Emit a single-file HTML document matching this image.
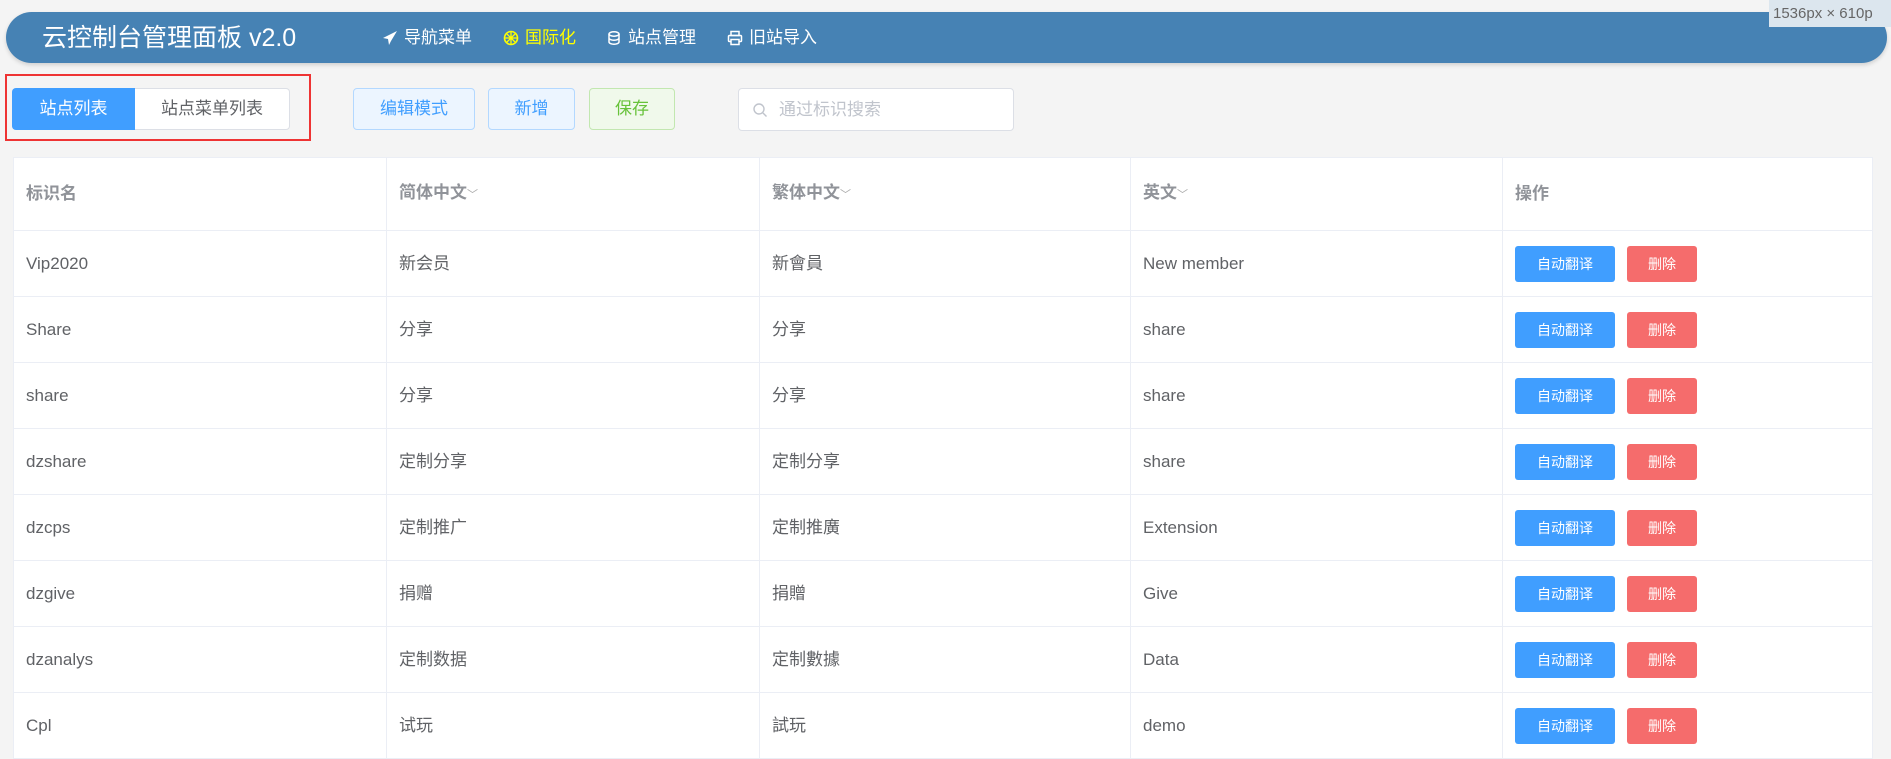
<!DOCTYPE html>
<html><head><meta charset="utf-8"><style>
*{box-sizing:border-box;margin:0;padding:0}
body{width:1891px;height:758px;overflow:hidden;background:#f4f4f4;font-family:"Liberation Sans","Noto Sans CJK SC",sans-serif;position:relative;color:#606266}
.hdr{position:absolute;left:6px;top:12px;width:1881px;height:51px;background:#4682b4;border-radius:26px;box-shadow:0 2px 4px rgba(0,0,0,.15)}
.title{position:absolute;left:36px;top:11px;font-size:25px;color:#fff;line-height:30px}
.nav{position:absolute;top:15px;font-size:17px;color:#fff;line-height:22px;display:flex;align-items:center;gap:6px}
.nav.act{color:#ffff00}
.badge{position:absolute;right:0;top:0;width:122px;height:27px;background:#dce6ee;color:#666;font-size:15px;line-height:27px;padding-left:4px}
.red{position:absolute;left:5px;top:74px;width:306px;height:67px;border:2px solid #e33}
.tab{position:absolute;top:88px;height:42px;font-size:17px;line-height:42px;text-align:center}
.btn{position:absolute;top:88px;height:42px;border-radius:4px;font-size:17px;line-height:40px;text-align:center}
.search{position:absolute;left:738px;top:88px;width:276px;height:43px;background:#fff;border:1px solid #dcdfe6;border-radius:4px;color:#c0c4cc;font-size:17px;line-height:41px;padding-left:40px}
table{position:absolute;left:13px;top:157px;width:1860px;border-collapse:collapse;background:#fff;font-size:17px}
td,th{border:1px solid #ebeef5;text-align:left;padding-left:12px;font-weight:normal;line-height:20px;vertical-align:middle}
th{height:73px;color:#909399;font-weight:bold}
td{height:66px}
.a{display:inline-block;width:100px;height:36px;line-height:36px;text-align:center;color:#fff;background:#409eff;border-radius:3px;font-size:14px;vertical-align:middle}
.d{display:inline-block;width:70px;height:36px;line-height:36px;text-align:center;color:#fff;background:#f56c6c;border-radius:3px;font-size:14px;margin-left:12px;vertical-align:middle}
.ar{font-size:11px;color:#aaa;font-weight:normal}
</style></head><body>
<div class="hdr">
<div class="title">云控制台管理面板 v2.0</div>
<div class="nav" style="left:376px"><svg width="16" height="16" viewBox="0 0 16 16"><path d="M15 1L1 8l5 1 1 6 2-4z" fill="#fff"/></svg>导航菜单</div>
<div class="nav act" style="left:497px"><svg width="16" height="16" viewBox="0 0 16 16"><circle cx="8" cy="8" r="6.5" fill="none" stroke="#ff0" stroke-width="1.6"/><path d="M8 2v12M2 8h12M4 4l8 8M12 4l-8 8" stroke="#ff0" stroke-width="1.3"/></svg>国际化</div>
<div class="nav" style="left:600px"><svg width="16" height="16" viewBox="0 0 16 16"><ellipse cx="8" cy="4" rx="5" ry="2.2" fill="none" stroke="#fff" stroke-width="1.5"/><path d="M3 4v8c0 1.2 2.2 2.2 5 2.2s5-1 5-2.2V4M3 8c0 1.2 2.2 2.2 5 2.2s5-1 5-2.2" fill="none" stroke="#fff" stroke-width="1.5"/></svg>站点管理</div>
<div class="nav" style="left:721px"><svg width="16" height="16" viewBox="0 0 16 16"><rect x="4" y="1.5" width="8" height="4" fill="none" stroke="#fff" stroke-width="1.5"/><rect x="1.5" y="5.5" width="13" height="6" rx="1" fill="none" stroke="#fff" stroke-width="1.5"/><rect x="4" y="9.5" width="8" height="5" fill="#4682b4" stroke="#fff" stroke-width="1.5"/></svg>旧站导入</div>
</div>
<div class="badge">1536px × 610p</div>
<div class="red"></div>
<div class="tab" style="left:12px;width:123px;background:#409eff;color:#fff;border-radius:4px 0 0 4px">站点列表</div>
<div class="tab" style="left:135px;width:155px;background:#fff;color:#606266;border:1px solid #dcdfe6;border-left:none;border-radius:0 4px 4px 0;line-height:40px">站点菜单列表</div>
<div class="btn" style="left:353px;width:122px;background:#ecf5ff;border:1px solid #b3d8ff;color:#409eff">编辑模式</div>
<div class="btn" style="left:488px;width:87px;background:#ecf5ff;border:1px solid #b3d8ff;color:#409eff">新增</div>
<div class="btn" style="left:589px;width:86px;background:#f0f9eb;border:1px solid #c2e7b0;color:#67c23a">保存</div>
<div class="search"><svg style="position:absolute;left:13px;top:13px" width="16" height="16" viewBox="0 0 16 16"><circle cx="7" cy="7" r="5" fill="none" stroke="#c0c4cc" stroke-width="1.4"/><path d="M11 11l3.5 3.5" stroke="#c0c4cc" stroke-width="1.4"/></svg>通过标识搜索</div>
<table>
<colgroup><col style="width:373px"><col style="width:373px"><col style="width:371px"><col style="width:372px"><col></colgroup>
<tr><th>标识名</th><th>简体中文<span class="ar">﹀</span></th><th>繁体中文<span class="ar">﹀</span></th><th>英文<span class="ar">﹀</span></th><th>操作</th></tr>
<tr><td>Vip2020</td><td>新会员</td><td>新會員</td><td>New member</td><td><span class="a">自动翻译</span><span class="d">删除</span></td></tr>
<tr><td>Share</td><td>分享</td><td>分享</td><td>share</td><td><span class="a">自动翻译</span><span class="d">删除</span></td></tr>
<tr><td>share</td><td>分享</td><td>分享</td><td>share</td><td><span class="a">自动翻译</span><span class="d">删除</span></td></tr>
<tr><td>dzshare</td><td>定制分享</td><td>定制分享</td><td>share</td><td><span class="a">自动翻译</span><span class="d">删除</span></td></tr>
<tr><td>dzcps</td><td>定制推广</td><td>定制推廣</td><td>Extension</td><td><span class="a">自动翻译</span><span class="d">删除</span></td></tr>
<tr><td>dzgive</td><td>捐赠</td><td>捐贈</td><td>Give</td><td><span class="a">自动翻译</span><span class="d">删除</span></td></tr>
<tr><td>dzanalys</td><td>定制数据</td><td>定制數據</td><td>Data</td><td><span class="a">自动翻译</span><span class="d">删除</span></td></tr>
<tr><td>Cpl</td><td>试玩</td><td>試玩</td><td>demo</td><td><span class="a">自动翻译</span><span class="d">删除</span></td></tr>
</table>
</body></html>
